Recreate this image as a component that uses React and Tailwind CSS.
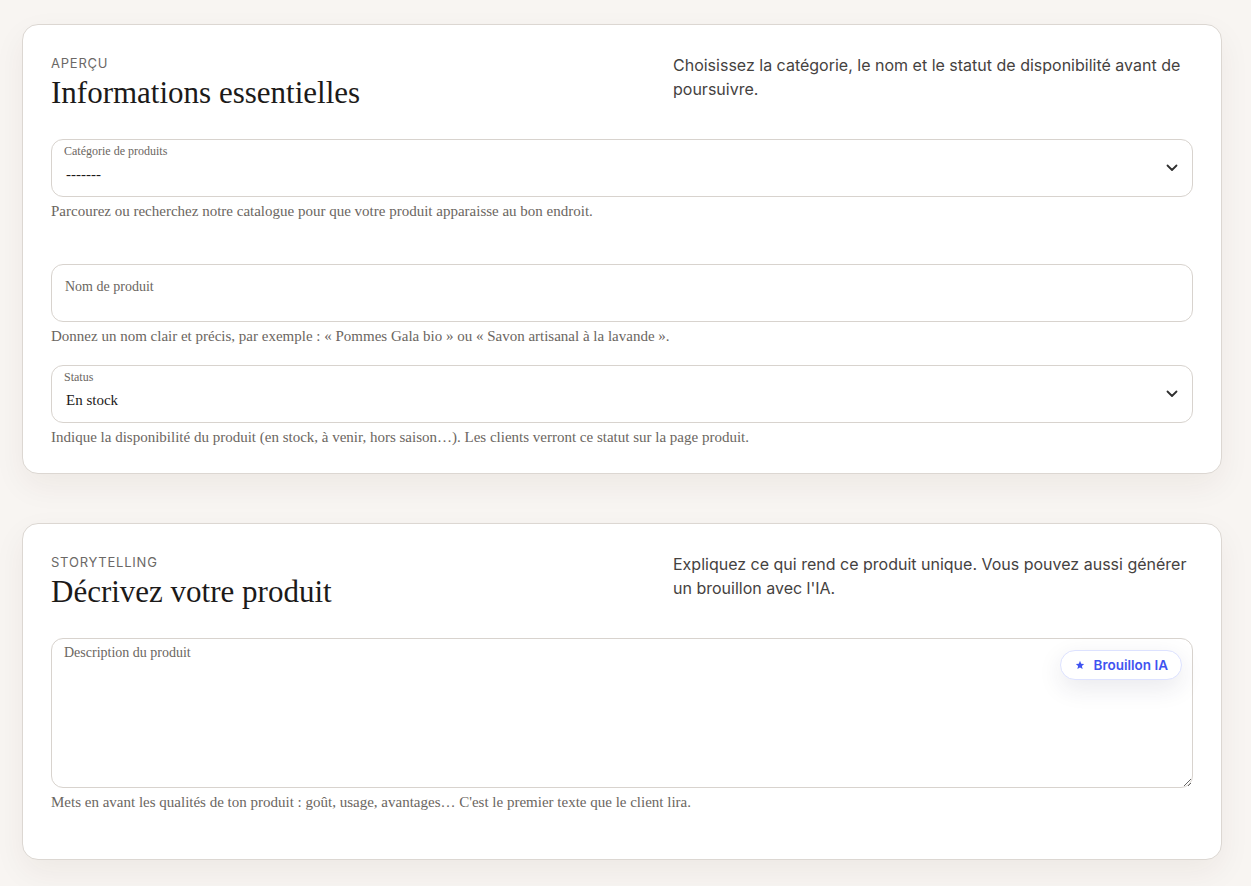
import React from "react";

const serif = { fontFamily: '"Liberation Serif", "DejaVu Serif", serif' };
const sans = { fontFamily: 'Inter, "Noto Sans", sans-serif' };

function Chevron() {
  return (
    <svg width="12" height="8" viewBox="0 0 12 8" fill="none" className="shrink-0">
      <path d="M1.5 1.5L6 6L10.5 1.5" stroke="#2f2f2f" strokeWidth="1.8" strokeLinecap="round" strokeLinejoin="round" />
    </svg>
  );
}

function SectionHeader({ kicker, title, desc }) {
  return (
    <div className="flex justify-between items-start">
      <div>
        <div className="text-[13px] leading-[20px] tracking-[0.06em] text-[#6b6866]" style={sans}>{kicker}</div>
        <h2 className="text-[31px] leading-[38px] text-[#1c1a19] mt-[1px]" style={serif}>{title}</h2>
      </div>
      <p className="w-[520px] text-[16px] leading-[24px] text-[#45423f]" style={sans}>{desc}</p>
    </div>
  );
}

function Helper({ children }) {
  return (
    <p className="mt-[4px] text-[15px] leading-[20px] text-[#6b6661]" style={serif}>{children}</p>
  );
}

function SelectField({ label, value }) {
  return (
    <div className="h-[58px] rounded-[12px] border border-[#d8d3ce] bg-white flex items-center justify-between pl-[12px] pr-[14px]">
      <div className="flex flex-col self-stretch pt-[3px]">
        <span className="text-[12px] leading-[16px] text-[#6b6661]" style={serif}>{label}</span>
        <span className="text-[15px] leading-[20px] text-[#1c1a19] mt-[5px] pl-[2px]" style={serif}>{value}</span>
      </div>
      <Chevron />
    </div>
  );
}

function Card({ children, className = "" }) {
  return (
    <section className={"w-[1200px] rounded-[16px] border border-[#dcd7d2] bg-white px-[28px] pt-[28px] shadow-[0_12px_32px_rgba(60,40,20,0.06)] " + className}>
      {children}
    </section>
  );
}

export default function App() {
  return (
    <div className="min-h-[886px] bg-[#f8f5f2] pt-[24px] pl-[22px] pb-[27px]">
      <Card className="pb-[26px]">
        <SectionHeader
          kicker="APERÇU"
          title="Informations essentielles"
          desc="Choisissez la catégorie, le nom et le statut de disponibilité avant de poursuivre."
        />
        <div className="mt-[27px]">
          <SelectField label="Catégorie de produits" value="-------" />
          <Helper>Parcourez ou recherchez notre catalogue pour que votre produit apparaisse au bon endroit.</Helper>
        </div>
        <div className="mt-[43px]">
          <div className="h-[58px] rounded-[12px] border border-[#d8d3ce] bg-white pl-[13px] pt-[8px]">
            <span className="text-[14px] leading-[20px] text-[#6b6661]" style={serif}>Nom de produit</span>
          </div>
          <Helper>Donnez un nom clair et précis, par exemple : « Pommes Gala bio » ou « Savon artisanal à la lavande ».</Helper>
        </div>
        <div className="mt-[19px]">
          <SelectField label="Status" value="En stock" />
          <Helper>Indique la disponibilité du produit (en stock, à venir, hors saison…). Les clients verront ce statut sur la page produit.</Helper>
        </div>
      </Card>

      <Card className="mt-[49px] pb-[47px]">
        <SectionHeader
          kicker="STORYTELLING"
          title="Décrivez votre produit"
          desc="Expliquez ce qui rend ce produit unique. Vous pouvez aussi générer un brouillon avec l'IA."
        />
        <div className="mt-[27px]">
          <div className="relative">
            <textarea
              className="block w-full h-[150px] rounded-[12px] border border-[#d8d3ce] bg-white outline-none"
              aria-label="Description du produit"
            />
            <span className="absolute left-[13px] top-[5px] text-[14px] leading-[20px] text-[#6b6661] pointer-events-none" style={serif}>Description du produit</span>
            <button
              className="absolute right-[11px] top-[12px] h-[30px] pl-[14px] pr-[13px] flex items-center gap-[9px] rounded-full border border-[#dde2ff] bg-white shadow-[0_8px_24px_rgba(40,40,80,0.10)] text-[#3f53f0] text-[13.5px] font-semibold"
              style={sans}
            >
              <svg width="10" height="10" viewBox="0 0 24 24" fill="#3f53f0">
                <path d="M12 2l2.9 6.9 7.1.6-5.4 4.7 1.7 7.3L12 17.8 5.7 21.5l1.7-7.3L2 9.5l7.1-.6z" />
              </svg>
              Brouillon IA
            </button>
          </div>
          <Helper>Mets en avant les qualités de ton produit : goût, usage, avantages… C'est le premier texte que le client lira.</Helper>
        </div>
      </Card>
    </div>
  );
}
